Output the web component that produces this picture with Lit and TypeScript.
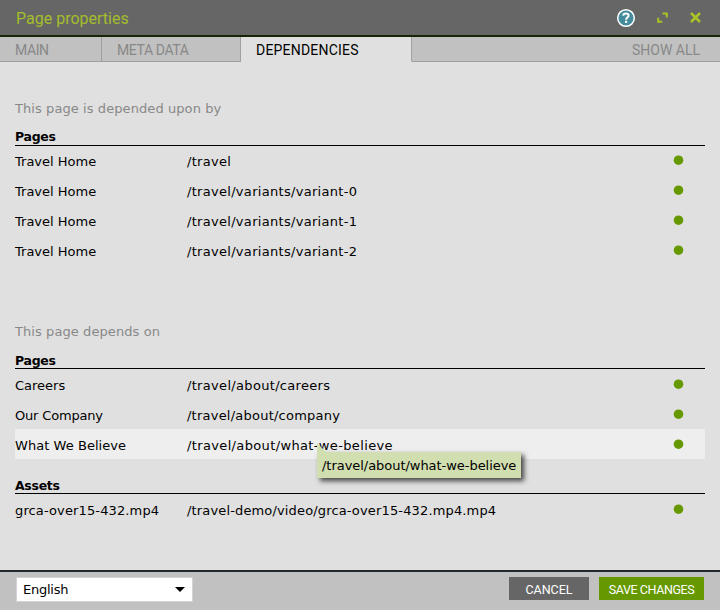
import { LitElement, html, css } from "lit";
import { customElement, property } from "lit/decorators.js";
import { classMap } from "lit/directives/class-map.js";
import { styleMap } from "lit/directives/style-map.js";

interface Item {
  name: string;
  path: string;
  hover?: boolean;
  nameTracking?: number;
  pathTracking?: number;
}

const tracking = (px = 0) => styleMap({ letterSpacing: `${px}px` });

@customElement("dependency-group")
class DependencyGroup extends LitElement {
  @property() heading = "";
  @property({ attribute: false }) items: Item[] = [];

  static styles = css`
    :host { display: block; --text-line: 32px; --heading-line: 21px; --dot-top: 9px; }
    :host(.low) { --text-line: 34px; --heading-line: 23px; --dot-top: 10px; }
    .heading {
      height: 19px; line-height: var(--heading-line); border-bottom: 1px solid #000;
      font-size: 12.5px; font-weight: bold; letter-spacing: -0.3px; color: #000;
    }
    .row {
      position: relative; display: grid; grid-template-columns: 172px 1fr 32px;
      height: 30px; line-height: var(--text-line); color: #000;
    }
    .row.hover { background: #eee; }
    .dot { display: block; width: 11px; height: 11px; margin-top: var(--dot-top); fill: #690; }
    .tip {
      position: absolute; left: 302px; top: 23px; box-sizing: border-box; width: 204px; height: 26px;
      padding-left: 5px; line-height: 27px; background: #d1deb0; white-space: nowrap;
      box-shadow: 3px 3px 5px #444; letter-spacing: -0.04px; z-index: 1;
    }
    .tip::before {
      content: ""; position: absolute; left: 0; top: -9px;
      border-left: 9px solid #d1deb0; border-top: 9px solid transparent;
    }
  `;

  render() {
    return html`
      <div class="heading">${this.heading}</div>
      ${this.items.map(
        (i) => html`<div class=${classMap({ row: true, hover: !!i.hover })}>
          <span style=${tracking(i.nameTracking)}>${i.name}</span>
          <span style=${tracking(i.pathTracking)}>${i.path}</span>
          <svg class="dot" viewBox="0 0 11 11"><circle cx="5.5" cy="5.2" r="4.8" /></svg>
          ${i.hover ? html`<div class="tip">${i.path}</div>` : ""}
        </div>`
      )}
    `;
  }
}

@customElement("app-root")
class AppRoot extends LitElement {
  static styles = css`
    :host {
      display: flex; flex-direction: column; width: 720px; height: 610px; overflow: hidden;
      background: #e0e0e0; font: 13px "DejaVu Sans", sans-serif; color: #000;
    }
    .header {
      display: flex; align-items: center; box-sizing: border-box; height: 37px; flex: none;
      padding: 0 19px 0 16px; background: #666; border-bottom: 2px solid #182408;
    }
    .title { flex: 1; font: 16px Roboto, sans-serif; color: #a4bd2c; padding-top: 1px; }
    .help { width: 20px; height: 20px; }
    .expand { width: 11px; height: 11px; margin-left: 21px; }
    .close { width: 11px; height: 11px; margin-left: 22px; }
    .tabs {
      display: flex; height: 25px; flex: none; font: 14px/26px Roboto, sans-serif; color: #888;
    }
    .tab {
      box-sizing: border-box; height: 25px; padding-left: 15px; background: #c1c1c1;
      border-right: 1px solid #a0a0a0; border-bottom: 1px solid #a0a0a0;
    }
    .main { width: 102px; letter-spacing: -0.4px; }
    .meta { width: 139px; letter-spacing: -0.4px; }
    .active {
      width: 171px; background: #e0e0e0; border-bottom-color: #e0e0e0; color: #000; letter-spacing: 0.2px;
    }
    .all { flex: 1; border-right: 0; text-align: right; padding-right: 20px; }
    .content { flex: 1; padding: 37px 15px 0; }
    .intro { height: 18px; line-height: 20px; color: #888; letter-spacing: 0.08px; }
    .first { margin-top: 9px; }
    .second { margin-top: 56px; }
    .on { margin-top: 9px; }
    .assets { margin-top: 15px; }
    .footer {
      display: flex; align-items: flex-start; box-sizing: border-box; height: 40px; flex: none;
      padding: 5px 16px 0; background: #c1c1c1; border-top: 2px solid #20272c;
    }
    .select {
      display: flex; align-items: center; justify-content: space-between; box-sizing: border-box;
      width: 177px; height: 25px; padding: 0 7px 0 6px; background: #fff; border: 1px solid #d3d3d3;
      letter-spacing: -0.25px;
    }
    .arrow { border: 5px solid transparent; border-top-color: #000; border-bottom: 0; }
    .button {
      height: 23px; font: 12.5px/25px Roboto, sans-serif; color: #fff; text-align: center;
    }
    .cancel { width: 80px; margin-left: auto; background: #666; }
    .save { width: 105px; margin-left: 10px; background: #690; letter-spacing: -0.4px; }
  `;

  private usedBy: Item[] = [
    { name: "Travel Home", path: "/travel", pathTracking: 0.28 },
    { name: "Travel Home", path: "/travel/variants/variant-0", pathTracking: 0.3 },
    { name: "Travel Home", path: "/travel/variants/variant-1", pathTracking: 0.3 },
    { name: "Travel Home", path: "/travel/variants/variant-2", pathTracking: 0.3 },
  ];
  private pages: Item[] = [
    { name: "Careers", path: "/travel/about/careers", pathTracking: 0.32 },
    { name: "Our Company", path: "/travel/about/company", nameTracking: -0.18, pathTracking: 0.23 },
    {
      name: "What We Believe", path: "/travel/about/what-we-believe",
      nameTracking: 0.05, pathTracking: 0.36, hover: true,
    },
  ];
  private assets: Item[] = [
    {
      name: "grca-over15-432.mp4", path: "/travel-demo/video/grca-over15-432.mp4.mp4",
      nameTracking: 0.13, pathTracking: 0.15,
    },
  ];

  render() {
    return html`
      <div class="header">
        <div class="title">Page properties</div>
        <svg class="help" viewBox="0 0 20 20">
          <circle cx="10" cy="10" r="8.3" fill="#448c9c" stroke="#fff" stroke-width="1.5" />
          <path d="M7.2 7.7Q7.4 5.6 10 5.6T12.6 7.7C12.6 9.5 10.1 9.3 10.1 11.8" fill="none" stroke="#fff" stroke-width="2" />
          <rect x="9" y="12.8" width="2.2" height="2.1" fill="#fff" />
        </svg>
        <svg class="expand" viewBox="0 0 11 11" fill="none" stroke="#a9c425" stroke-width="2">
          <path d="M5.5 1.5H9.8V5.5M1.2 5.8V9.8H5.2" />
        </svg>
        <svg class="close" viewBox="0 0 11 11" stroke="#a9c425" stroke-width="2.5">
          <path d="M1 1L10 10M10 1L1 10" />
        </svg>
      </div>
      <div class="tabs">
        <div class="tab main">MAIN</div>
        <div class="tab meta">META DATA</div>
        <div class="tab active">DEPENDENCIES</div>
        <div class="tab all">SHOW ALL</div>
      </div>
      <div class="content">
        <div class="intro">This page is depended upon by</div>
        <dependency-group class="first" heading="Pages" .items=${this.usedBy}></dependency-group>
        <div class="intro second">This page depends on</div>
        <dependency-group class="on low" heading="Pages" .items=${this.pages}></dependency-group>
        <dependency-group class="assets low" heading="Assets" .items=${this.assets}></dependency-group>
      </div>
      <div class="footer">
        <div class="select"><span>English</span><span class="arrow"></span></div>
        <div class="button cancel">CANCEL</div>
        <div class="button save">SAVE CHANGES</div>
      </div>
    `;
  }
}
